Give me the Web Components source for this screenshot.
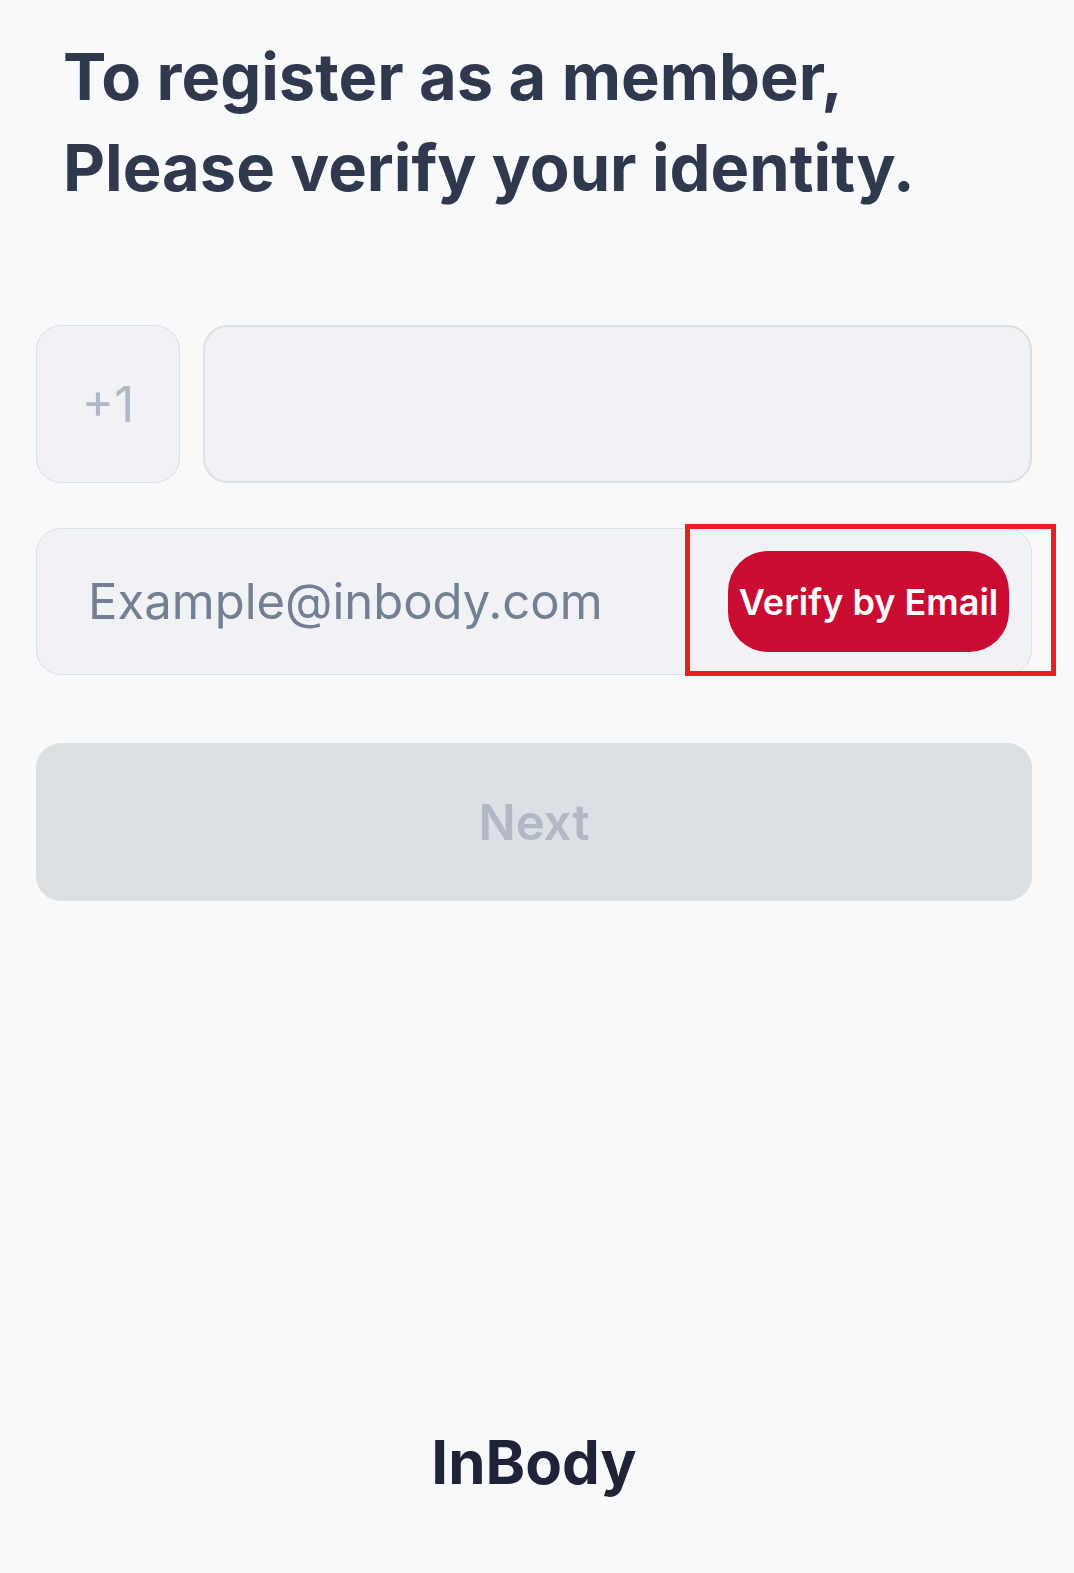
<!DOCTYPE html>
<html lang="en">
<head>
<meta charset="utf-8">
<meta name="viewport" content="width=device-width, initial-scale=1">
<title>Verify your identity</title>
<style>
  body {
    margin: 0;
    background: #f7f9fb;
    color: #30384d;
    font-family: Inter, "Liberation Sans", sans-serif;
  }
</style>
</head>
<body>
<verify-page>
  <page-title slot="title">To register as a member,<br>Please verify your identity.</page-title>
  <phone-field code="+1"></phone-field>
  <email-field placeholder="Example@inbody.com">
    <highlight-frame slot="action"><verify-button>Verify by Email</verify-button></highlight-frame>
  </email-field>
  <next-button>Next</next-button>
  <brand-logo slot="footer">InBody</brand-logo>
</verify-page>
<script>
  const define = (name, html, setup) => {
    const template = document.createElement('template');
    template.innerHTML = html;
    customElements.define(name, class extends HTMLElement {
      connectedCallback() {
        if (this.shadowRoot) return;
        this.attachShadow({ mode: 'open' }).append(template.content.cloneNode(true));
        if (setup) setup(this, this.shadowRoot);
      }
    });
  };

  define('verify-page', `
    <style>
      :host { display: flex; flex-direction: column; box-sizing: border-box; min-height: 100vh; padding: 31px 42px 71px 36px; }
      form { display: flex; flex-direction: column; margin-top: 112px; }
      footer { display: flex; justify-content: center; margin-top: auto; }
    </style>
    <slot name="title"></slot>
    <form><slot></slot></form>
    <footer><slot name="footer"></slot></footer>`);

  define('page-title', `
    <style>
      :host { display: block; padding-left: 27px; }
      h1 { margin: 0; font-size: 65px; line-height: 91px; font-weight: 700; }
    </style>
    <h1><slot></slot></h1>`);

  define('phone-field', `
    <style>
      :host { display: flex; gap: 23px; height: 158px; }
      input { box-sizing: border-box; min-width: 0; margin: 0; border: 1px solid #dcdfe3; border-radius: 25px;
              background: #f0f2f6; font: inherit; font-size: 49px; color: #6f8095; outline: none; }
      .code { width: 144px; padding: 0; text-align: center; color: #afb8c4; }
      .number { flex: 1; padding: 0 52px; border-width: 2px; }
    </style>
    <input class="code" aria-label="Country code" readonly>
    <input class="number" type="tel" aria-label="Phone number">`,
    (host, root) => { root.querySelector('.code').value = host.getAttribute('code'); });

  define('email-field', `
    <style>
      :host { display: flex; align-items: center; box-sizing: border-box; height: 147px; margin-top: 45px;
              padding: 0 22px 0 51px; border: 1px solid #dcdfe3; border-radius: 25px; background: #f0f2f6; }
      input { flex: 1; min-width: 0; height: 100px; margin: 0; padding: 0; border: 0; background: none;
              font: inherit; font-size: 49px; color: #738093; outline: none; }
      input::placeholder { color: #738093; opacity: 1; }
    </style>
    <input type="email" aria-label="Email">
    <slot name="action"></slot>`,
    (host, root) => { root.querySelector('input').placeholder = host.getAttribute('placeholder'); });

  define('verify-button', `
    <style>
      :host { display: block; }
      button { display: block; width: 281px; height: 101px; margin: 0; padding: 0; border: 0; border-radius: 40px;
               background: #ca0c33; color: #fff; font: inherit; font-size: 36px; font-weight: 600; white-space: nowrap; }
    </style>
    <button type="button"><slot></slot></button>`);

  define('highlight-frame', `
    <style>
      :host { display: block; position: relative; }
      .frame { position: absolute; inset: -27px -47px -24px -43px; border: 5px solid #ee1c25; pointer-events: none; }
    </style>
    <slot></slot>
    <div class="frame"></div>`);

  define('next-button', `
    <style>
      :host { display: block; margin-top: 68px; }
      button { display: block; width: 100%; height: 158px; margin: 0; padding: 0; border: 0; border-radius: 25px;
               background: #dcdfe4; color: #b0b9c4; font: inherit; font-size: 49px; font-weight: 600; }
    </style>
    <button type="button" disabled><slot></slot></button>`);

  define('brand-logo', `
    <style>
      :host { display: block; font-size: 60px; line-height: 80px; font-weight: 700; color: #1f2337; }
    </style>
    <slot></slot>`);
</script>
</body>
</html>
